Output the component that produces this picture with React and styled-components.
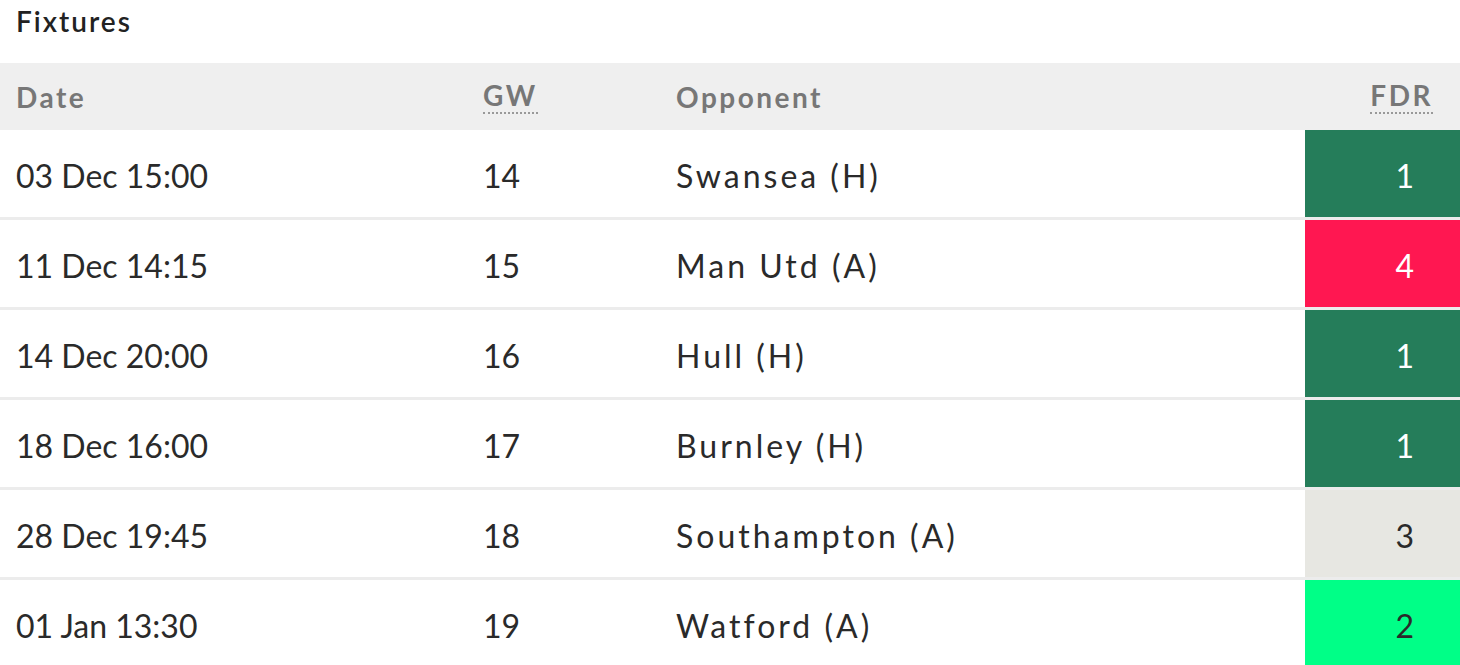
import styled, { createGlobalStyle } from "styled-components"

const GlobalStyle = createGlobalStyle`
body {
  margin: 0;
  background: #fff;
  font-family: Lato, "Noto Sans", sans-serif;
}
`;

const Container = styled.div`
width: 1460px;
`;

const Title = styled.h3`
margin: 0;
height: 63px;
padding: 4px 16px 0;
box-sizing: border-box;
font-size: 28px;
font-weight: 600;
letter-spacing: 2px;
color: #222;
`;

const Row = styled.div`
display: grid;
grid-template-columns: 483px 193px 1fr 155px;
align-items: stretch;
height: ${props => props.head ? "67px" : "87px"};
background-color: ${props => props.head ? "#efefef" : "#fff"};
border-bottom: ${props => props.head ? "none" : "3px solid #ececec"};
`;

const Cell = styled.div`
display: flex;
align-items: center;
padding-left: ${props => props.first ? "16px" : "0"};
padding-top: 3px;
font-size: 32px;
letter-spacing: ${props => props.wide ? "3px" : "0"};
color: #2a2a2a;
`;

const HeadCell = styled(Cell)`
padding-top: 0;
font-size: 28px;
font-weight: 700;
letter-spacing: 2.5px;
color: #777;
justify-content: ${props => props.right ? "flex-end" : "flex-start"};
padding-right: ${props => props.right ? "27px" : "0"};
`;

const Abbr = styled.span`
border-bottom: 2px dotted #999;
line-height: 1.15;
`;

const fdrColors = {
  1: { bg: "#257d5a", fg: "#fff" },
  2: { bg: "#00ff87", fg: "#2a2a2a" },
  3: { bg: "#e7e7e2", fg: "#2a2a2a" },
  4: { bg: "#ff1751", fg: "#fff" },
  5: { bg: "#80072d", fg: "#fff" },
};

const Fdr = styled.div`
display: flex;
align-items: center;
justify-content: flex-end;
padding: 3px 46px 0 0;
font-size: 32px;
background-color: ${props => fdrColors[props.level].bg};
color: ${props => fdrColors[props.level].fg};
`;

const fixtures = [
  { date: "03 Dec 15:00", gw: 14, opp: "Swansea (H)", fdr: 1 },
  { date: "11 Dec 14:15", gw: 15, opp: "Man Utd (A)", fdr: 4 },
  { date: "14 Dec 20:00", gw: 16, opp: "Hull (H)", fdr: 1 },
  { date: "18 Dec 16:00", gw: 17, opp: "Burnley (H)", fdr: 1 },
  { date: "28 Dec 19:45", gw: 18, opp: "Southampton (A)", fdr: 3 },
  { date: "01 Jan 13:30", gw: 19, opp: "Watford (A)", fdr: 2 },
];

const App = () => {
  return (
    <Container>
      <GlobalStyle />
      <Title>Fixtures</Title>
      <Row head>
        <HeadCell first>Date</HeadCell>
        <HeadCell><Abbr>GW</Abbr></HeadCell>
        <HeadCell>Opponent</HeadCell>
        <HeadCell right><Abbr>FDR</Abbr></HeadCell>
      </Row>
      {fixtures.map(f => (
        <Row key={f.gw}>
          <Cell first>{f.date}</Cell>
          <Cell>{f.gw}</Cell>
          <Cell wide>{f.opp}</Cell>
          <Fdr level={f.fdr}>{f.fdr}</Fdr>
        </Row>
      ))}
    </Container>
  )
}

export default App
